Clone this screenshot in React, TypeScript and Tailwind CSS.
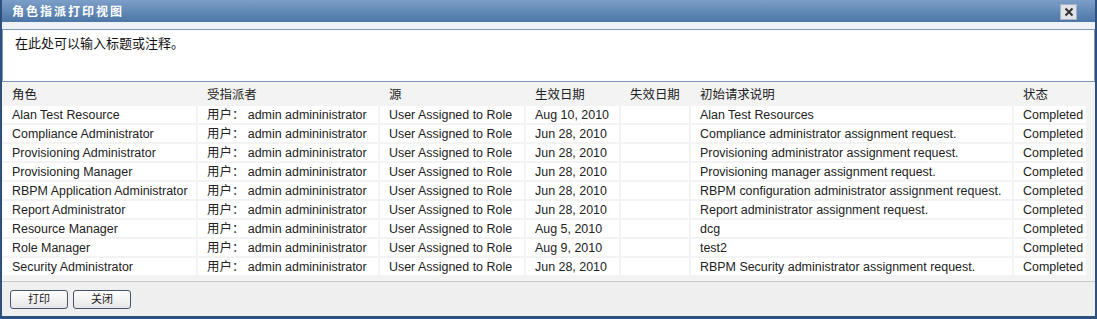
const rows = [
	['Alan Test Resource', 'Aug 10, 2010', 'Alan Test Resources'],
	['Compliance Administrator', 'Jun 28, 2010', 'Compliance administrator assignment request.'],
	['Provisioning Administrator', 'Jun 28, 2010', 'Provisioning administrator assignment request.'],
	['Provisioning Manager', 'Jun 28, 2010', 'Provisioning manager assignment request.'],
	['RBPM Application Administrator', 'Jun 28, 2010', 'RBPM configuration administrator assignment request.'],
	['Report Administrator', 'Jun 28, 2010', 'Report administrator assignment request.'],
	['Resource Manager', 'Aug 5, 2010', 'dcg'],
	['Role Manager', 'Aug 9, 2010', 'test2'],
	['Security Administrator', 'Jun 28, 2010', 'RBPM Security administrator assignment request.'],
]

const headers = ['角色', '受指派者', '源', '生效日期', '失效日期', '初始请求说明', '状态']

const cols = 'grid grid-cols-[193px_180px_144px_93px_68px_321px_72px] gap-x-[2px]'

export default function App() {
	return (
		<div
			className="w-[1097px] h-[319px] flex flex-col border-x-2 border-b-[3px] border-[#2d507e] bg-[#efefef] text-[12.45px] text-[#222] overflow-hidden"
			style={{ fontFamily: '"Liberation Sans", "Noto Sans CJK SC", sans-serif' }}
		>
			{/* Title bar */}
			<div className="h-[22px] shrink-0 flex items-center justify-between pl-[10px] pr-[18px] pt-[2px] bg-gradient-to-b from-[#7c9fc8] to-[#4c76a6]">
				<span className="text-white font-bold text-[12px] tracking-[2px]">角色指派打印视图</span>
				<div className="w-[17px] h-[16px] bg-[#dfe3e8] border border-[#a9b4c2] flex items-center justify-center">
					<svg width="10" height="10" viewBox="0 0 10 10">
						<path d="M1.5 1.5 L8.5 8.5 M8.5 1.5 L1.5 8.5" stroke="#333" strokeWidth="2" />
					</svg>
				</div>
			</div>
			<div className="h-[7px] shrink-0 bg-[#eef1f5]" />

			{/* Notes */}
			<div className="h-[53px] shrink-0 bg-white border border-[#7f97b7] pl-[12px] pt-[4px] text-[13px] text-[#111]">
				在此处可以输入标题或注释。
			</div>

			{/* Table */}
			<div className="bg-[#f3f3f3] pl-[1px] pb-[4px]">
				<div className={`${cols} h-[24px] items-center pt-[2px]`}>
					{headers.map(h => (
						<div key={h} className="pl-[9px]">{h}</div>
					))}
				</div>
				{rows.map(([role, date, desc]) => (
					<div key={role} className={`${cols} h-[19px] pb-[2px]`}>
						{[role, '用户： admin admininistrator', 'User Assigned to Role', date, '', desc, 'Completed'].map((c, i) => (
							<div key={i} className="bg-white pl-[9px] pt-[1px] leading-[17px] whitespace-nowrap overflow-hidden">
								{c}
							</div>
						))}
					</div>
				))}
			</div>

			{/* Footer */}
			<div className="flex-1 border-t border-[#c8c8c8] bg-[#efefef] flex items-start gap-[5px] pl-[8px] pt-[8px]">
				<button className="w-[58px] h-[19px] rounded-[3px] border border-[#44556b] bg-gradient-to-b from-white to-[#e6e6e6] text-[11px] leading-none">
					打印
				</button>
				<button className="w-[58px] h-[19px] rounded-[3px] border border-[#44556b] bg-gradient-to-b from-white to-[#e6e6e6] text-[11px] leading-none">
					关闭
				</button>
			</div>
		</div>
	)
}
